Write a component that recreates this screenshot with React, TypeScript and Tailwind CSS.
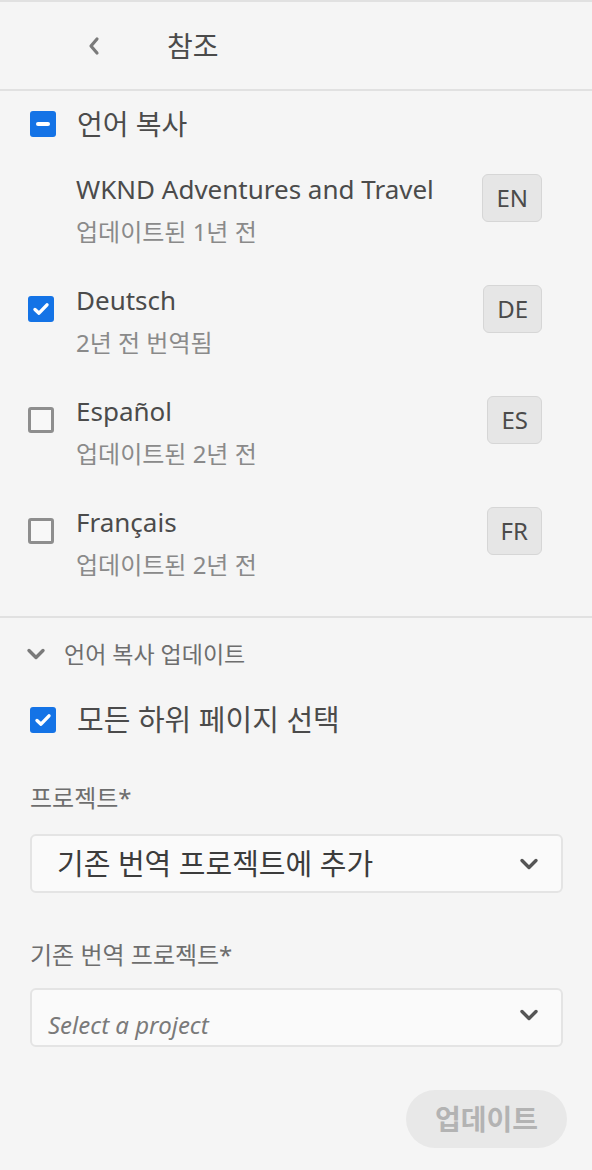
import React from "react"

const font = { fontFamily: '"Noto Sans", "Noto Sans CJK KR", sans-serif' }

function Check({ state }: { state: "on" | "off" | "mixed" }) {
  if (state === "off") {
    return <div className="w-[26px] h-[26px] shrink-0 rounded-[3px] border-[3px] border-[#8e8e8e] bg-[#f8f8f8]" />
  }
  return (
    <div className="w-[26px] h-[26px] shrink-0 rounded-[3px] bg-[#1473e6] flex items-center justify-center">
      {state === "on" ? (
        <svg width="18" height="18" viewBox="0 0 18 18">
          <path d="M3 9.5 L7 13.2 L15 4.8" fill="none" stroke="white" strokeWidth="3.4" strokeLinecap="round" strokeLinejoin="round" />
        </svg>
      ) : (
        <div className="w-[14px] h-[4px] rounded-full bg-white" />
      )}
    </div>
  )
}

function Chevron({ className }: { className?: string }) {
  return (
    <svg width="20" height="14" viewBox="0 0 20 14" className={className}>
      <path d="M3 3.5 L10 10.5 L17 3.5" fill="none" stroke="currentColor" strokeWidth="3.4" strokeLinecap="round" strokeLinejoin="round" />
    </svg>
  )
}

const langs = [
  { name: "WKND Adventures and Travel", sub: "업데이트된 1년 전", code: "EN", check: null },
  { name: "Deutsch", sub: "2년 전 번역됨", code: "DE", check: "on" as const },
  { name: "Español", sub: "업데이트된 2년 전", code: "ES", check: "off" as const },
  { name: "Français", sub: "업데이트된 2년 전", code: "FR", check: "off" as const },
]

export default function App() {
  return (
    <div className="w-[592px] h-[1170px] bg-[#f5f5f5] text-[#4b4b4b] border-t-2 border-[#e1e1e1] overflow-hidden" style={font}>
      {/* Header */}
      <div className="h-[89px] flex items-center border-b-2 border-[#e1e1e1]">
        <svg width="14" height="20" viewBox="0 0 14 20" className="ml-[87px] text-[#7a7a7a]">
          <path d="M10 3 L4 10 L10 17" fill="none" stroke="currentColor" strokeWidth="3.2" strokeLinecap="round" strokeLinejoin="round" />
        </svg>
        <span className="ml-[66px] text-[28px] text-[#4b4b4b]">참조</span>
      </div>

      {/* Language copies */}
      <div className="border-b-2 border-[#e1e1e1] pb-[15px]">
        <div className="flex items-center gap-[21px] pl-[30px] h-[66px]">
          <Check state="mixed" />
          <span className="text-[28px] leading-none text-[#4b4b4b]">언어 복사</span>
        </div>
        {langs.map((l) => (
          <div key={l.code} className="flex items-start h-[111px] pr-[50px] pl-[28px]">
            <div className="w-[26px] shrink-0 mt-[28px]">{l.check && <Check state={l.check} />}</div>
            <div className="ml-[22px] flex-1 flex flex-col pt-[15px]">
              <span className="text-[26px] leading-[34px] text-[#4b4b4b]">{l.name}</span>
              <span className="mt-[11px] text-[24px] leading-[30px] text-[#8a8a8a]">{l.sub}</span>
            </div>
            <div className="mt-[17px] h-[48px] px-[13px] rounded-[6px] bg-[#e6e6e6] border border-[#d6d6d6] flex items-center justify-center text-[24px] text-[#4b4b4b]">
              {l.code}
            </div>
          </div>
        ))}
      </div>

      {/* Update section */}
      <div className="pl-[30px] pr-[29px]">
        <div className="flex items-center h-[72px] gap-[18px] -ml-[4px]">
          <Chevron className="text-[#7a7a7a]" />
          <span className="text-[23px] text-[#6e6e6e]">언어 복사 업데이트</span>
        </div>
        <div className="flex items-center gap-[21px] h-[60px]">
          <Check state="on" />
          <span className="text-[29px] text-[#4b4b4b]">모든 하위 페이지 선택</span>
        </div>

        <div className="mt-[33px] text-[24px] text-[#6e6e6e] leading-[30px]">프로젝트*</div>
        <div className="mt-[21px] h-[59px] rounded-[6px] border-2 border-[#e4e4e4] bg-[#fafafa] flex items-center pl-[25px] pr-[22px]">
          <span className="flex-1 text-[29px] text-[#3c3c3c]">기존 번역 프로젝트에 추가</span>
          <Chevron className="text-[#555]" />
        </div>

        <div className="mt-[47px] text-[24px] text-[#6e6e6e] leading-[30px]">기존 번역 프로젝트*</div>
        <div className="mt-[18px] h-[59px] rounded-[6px] border-2 border-[#e4e4e4] bg-[#fafafa] flex pl-[16px] pr-[22px]">
          <span className="flex-1 self-end pb-[2px] text-[24px] italic text-[#7a7a7a]">Select a project</span>
          <Chevron className="text-[#555] mt-[18px]" />
        </div>

        <div className="flex justify-end mt-[43px] -mr-[4px]">
          <div className="w-[161px] h-[58px] rounded-full bg-[#e8e8e8] flex items-center justify-center text-[28px] font-bold text-[#b3b3b3]">
            업데이트
          </div>
        </div>
      </div>
    </div>
  )
}
